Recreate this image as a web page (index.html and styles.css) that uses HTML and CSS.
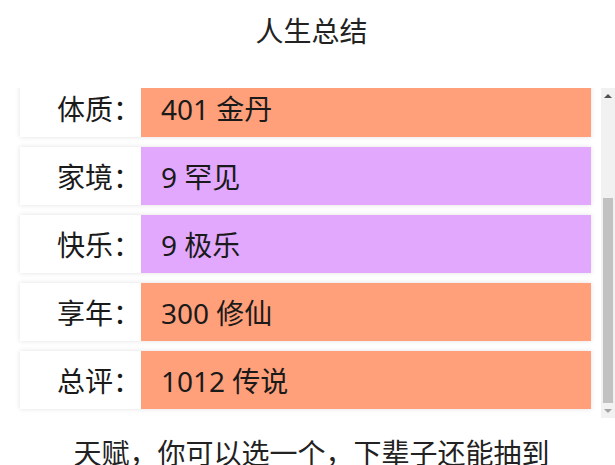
FILE: index.html
```html
<!DOCTYPE html>
<html lang="zh-CN">
<head>
<meta charset="utf-8">
<title>人生总结</title>
<link rel="stylesheet" href="styles.css">
</head>
<body>
<div class="page">
  <h1 class="title">人生总结</h1>
  <div class="summary-wrap">
    <div class="summary">
      <div class="summary-list">
        <div class="row"><div class="label">颜值：</div><div class="value rare">8 出众</div></div>
        <div class="row"><div class="label">智力：</div><div class="value rare">9 天才</div></div>
        <div class="row"><div class="label">体质：</div><div class="value legend">401 金丹</div></div>
        <div class="row"><div class="label">家境：</div><div class="value rare">9 罕见</div></div>
        <div class="row"><div class="label">快乐：</div><div class="value rare">9 极乐</div></div>
        <div class="row"><div class="label">享年：</div><div class="value legend">300 修仙</div></div>
        <div class="row"><div class="label">总评：</div><div class="value legend">1012 传说</div></div>
      </div>
    </div>
    <div class="scrollbar" aria-hidden="true">
      <div class="sb-btn"><span class="arrow-up"></span></div>
      <div class="sb-track"><div class="sb-thumb"></div></div>
      <div class="sb-btn"><span class="arrow-down"></span></div>
    </div>
  </div>
  <p class="hint">天赋，你可以选一个，下辈子还能抽到</p>
</div>
</body>
</html>
```

FILE: styles.css
```css
html, body {
  margin: 0;
  padding: 0;
  background: #ffffff;
}

body {
  font-family: "Noto Sans", "Noto Sans CJK SC", sans-serif;
  color: #1a1a1a;
  overflow: hidden;
}

.page {
  display: flex;
  flex-direction: column;
}

.title {
  margin: 0;
  padding-left: 8px;
  height: 60px;
  line-height: 60px;
  font-size: 28px;
  font-weight: 400;
  text-align: center;
  font-family: "Noto Sans CJK SC", sans-serif;
  color: #222;
}

.summary-wrap {
  margin-top: 28px;
  height: 330px;
  display: flex;
}

.summary {
  flex: 1;
  min-width: 0;
  overflow-y: auto;
  scrollbar-width: none;
  display: flex;
  flex-direction: column-reverse;
}

.summary::-webkit-scrollbar {
  display: none;
}

.summary-list {
  flex-shrink: 0;
  display: flex;
  flex-direction: column;
  gap: 10px;
  padding: 12px 10px 9px 20px;
}

.row {
  display: flex;
  height: 58px;
  background: #ffffff;
  box-shadow: 0 0 5px rgba(0, 0, 0, 0.12);
}

.label {
  width: 121px;
  flex-shrink: 0;
  display: flex;
  align-items: center;
  justify-content: flex-end;
  font-size: 28px;
  font-family: "Noto Sans CJK SC", sans-serif;
}

.value {
  flex: 1;
  display: flex;
  align-items: center;
  padding-left: 20px;
  font-size: 28px;
}

.legend {
  background: #ffa07a;
}

.rare {
  background: #e2a8fe;
}

.scrollbar {
  width: 14px;
  flex-shrink: 0;
  display: flex;
  flex-direction: column;
  background: #f1f1f1;
}

.sb-btn {
  height: 15px;
  display: flex;
  align-items: center;
  justify-content: center;
}

.arrow-up {
  width: 0;
  height: 0;
  border-left: 4px solid transparent;
  border-right: 4px solid transparent;
  border-bottom: 4px solid #505050;
}

.arrow-down {
  width: 0;
  height: 0;
  border-left: 4px solid transparent;
  border-right: 4px solid transparent;
  border-top: 4px solid #a3a3a3;
}

.sb-track {
  flex: 1;
  display: flex;
  flex-direction: column;
  justify-content: flex-end;
  padding: 0 2px;
}

.sb-thumb {
  height: 205px;
  background: #c1c1c1;
}

.hint {
  margin: 13px 0 0;
  padding-left: 8px;
  line-height: 42px;
  font-size: 28px;
  text-align: center;
  font-family: "Noto Sans CJK SC", sans-serif;
  color: #222;
}
```
